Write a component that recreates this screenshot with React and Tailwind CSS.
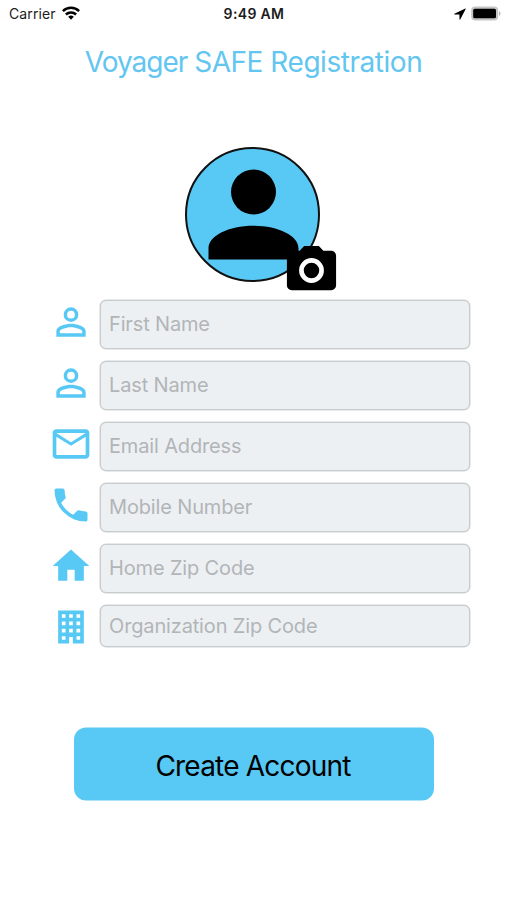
const icons = {
  account:
    'M12,4A4,4 0 0,1 16,8A4,4 0 0,1 12,12A4,4 0 0,1 8,8A4,4 0 0,1 12,4M12,14C16.42,14 20,15.79 20,18V20H4V18C4,15.79 7.58,14 12,14Z',
  person:
    'M12,4A4,4 0 0,1 16,8A4,4 0 0,1 12,12A4,4 0 0,1 8,8A4,4 0 0,1 12,4M12,5.9A2.1,2.1 0 0,0 9.9,8A2.1,2.1 0 0,0 12,10.1A2.1,2.1 0 0,0 14.1,8A2.1,2.1 0 0,0 12,5.9M12,13C14.67,13 20,14.33 20,17V20H4V17C4,14.33 9.33,13 12,13M12,14.9C9.03,14.9 5.9,16.36 5.9,17V18.1H18.1V17C18.1,16.36 14.97,14.9 12,14.9Z',
  email:
    'M22 6C22 4.9 21.1 4 20 4H4C2.9 4 2 4.9 2 6V18C2 19.1 2.9 20 4 20H20C21.1 20 22 19.1 22 18V6M20 6L12 11L4 6H20M20 18H4V8L12 13L20 8V18Z',
  phone:
    'M6.62,10.79C8.06,13.62 10.38,15.94 13.21,17.38L15.41,15.18C15.69,14.9 16.08,14.82 16.43,14.93C17.55,15.3 18.75,15.5 20,15.5A1,1 0 0,1 21,16.5V20A1,1 0 0,1 20,21A17,17 0 0,1 3,4A1,1 0 0,1 4,3H7.5A1,1 0 0,1 8.5,4C8.5,5.25 8.7,6.45 9.07,7.57C9.18,7.92 9.1,8.31 8.82,8.59L6.62,10.79Z',
  home: 'M10,20V14H14V20H19V12H22L12,3L2,12H5V20H10Z',
  office:
    'M5,3V21H11V17.5H13V21H19V3H5M7,5H9V7H7V5M11,5H13V7H11V5M15,5H17V7H15V5M7,9H9V11H7V9M11,9H13V11H11V9M15,9H17V11H15V9M7,13H9V15H7V13M11,13H13V15H11V13M15,13H17V15H15V13M7,17H9V19H7V17M15,17H17V19H15V17Z',
};

const fields = [
  { icon: 'person', label: 'First Name', box: 'h-[49px] pb-[2px]' },
  { icon: 'person', label: 'Last Name', box: 'h-[49px] pb-[2px]' },
  { icon: 'email', label: 'Email Address', box: 'h-[49px] pb-[2px]' },
  { icon: 'phone', label: 'Mobile Number', box: 'h-[49px] pb-[2px]' },
  { icon: 'home', label: 'Home Zip Code', box: 'h-[49px] pb-[2px]' },
  { icon: 'office', label: 'Organization Zip Code', box: 'h-[42px]' },
];

function Icon({ name, className }) {
  return (
    <svg viewBox="0 0 24 24" className={className} fill="currentColor" fillRule="evenodd">
      <path d={icons[name]} />
    </svg>
  );
}

function StatusBar() {
  return (
    <header className="grid h-7 grid-cols-3 items-center pl-[9px] pr-[6px] text-[14px] leading-none text-[#1c1c1c]">
      <div className="flex items-center gap-[6px]">
        <span className="tracking-[0.1px]">Carrier</span>
        <svg viewBox="0 0 18 14" className="-mt-[2px] h-[14px] w-[18px]" fill="none" stroke="#000" strokeWidth="2.5">
          <path d="M0.9 5.2A11.5 11.5 0 0 1 17.1 5.2" />
          <path d="M3.9 8.5A7.2 7.2 0 0 1 14.1 8.5" />
          <path d="M9 13.7L6.2 10.8A4 4 0 0 1 11.8 10.8Z" fill="#000" stroke="none" />
        </svg>
      </div>
      <div className="-ml-[2px] whitespace-nowrap text-center font-semibold tracking-[0.35px]">9:49 AM</div>
      <div className="flex items-center justify-end gap-[5px]">
        <svg viewBox="0 0 12 12" className="-mt-px h-3 w-3" fill="#000">
          <path d="M11.3 0.5L0.4 5.7C0 6 0.2 6.4 0.6 6.4L5.4 6.5L5.5 11.2C5.5 11.7 6 11.8 6.2 11.4L11.7 0.9C11.8 0.6 11.6 0.4 11.3 0.5Z" />
        </svg>
        <svg viewBox="0 0 30 15" className="-mt-[2px] h-[15px] w-[30px]">
          <rect x="0.2" y="0.5" width="27" height="14" rx="4" fill="#c4c4c4" />
          <rect x="2.2" y="2.7" width="22.8" height="9.6" rx="1.6" fill="#000" />
          <path d="M28.1 5.2C29.8 5.9 29.8 9.1 28.1 9.8Z" fill="#aaa" />
        </svg>
      </div>
    </header>
  );
}

function Avatar() {
  return (
    <div className="relative ml-[185px] mt-[64px] h-[135px] w-[135px] rounded-full border-2 border-[#111] bg-[#58c9f5]">
      <Icon name="account" className="-ml-[1.5px] -mt-[2px] h-[135px] w-[135px] text-black" />
      <svg viewBox="0 0 24 24" className="absolute left-[95px] top-[92px] h-[59px] w-[59px]">
        <path d="M9 2L7.17 4H4c-1.1 0-2 .9-2 2v12c0 1.1.9 2 2 2h16c1.1 0 2-.9 2-2V6c0-1.1-.9-2-2-2h-3.17L15 2H9z" />
        <circle cx="12" cy="12" r="4.1" fill="#000" stroke="#fff" strokeWidth="1.9" />
      </svg>
    </div>
  );
}

export default function App() {
  return (
    <main className="flex h-[900px] w-[507px] flex-col overflow-hidden bg-white font-[Inter,'Liberation_Sans',sans-serif]">
      <StatusBar />
      <h1 className="mt-[14px] whitespace-nowrap text-center text-[28px] leading-10 tracking-[-0.46px] text-[#62c6f0]">
        <span className="tracking-[-1px]">Voyager </span>SAFE Registration
      </h1>
      <div className="mt-px">
        <Avatar />
      </div>
      <form className="mt-[18px] flex flex-col gap-3 pl-[49px]">
        {fields.map((f) => (
          <div key={f.label} className="flex gap-[7px]">
            <Icon name={f.icon} className="-ml-[0.5px] mr-[0.5px] h-11 w-11 shrink-0 text-[#58c9f5]" />
            <div
              className={`flex w-[370px] items-center rounded-md border border-[#c9cccd] bg-[#ecf0f3] pl-2 shadow-[0_0_0_0.5px_#d2d4d5] ${f.box}`}
            >
              <span className="whitespace-nowrap text-[20px] leading-6 tracking-[-0.15px] text-[#b2b5b7]">{f.label}</span>
            </div>
          </div>
        ))}
      </form>
      <button
        type="button"
        className="ml-[74px] mt-20 h-[73px] w-[360px] -translate-y-[1.5px] rounded-xl bg-[#58c9f5] pr-[2px] pt-[2px] text-[28px] tracking-[-0.8px] text-black"
      >
        Create Account
      </button>
    </main>
  );
}
